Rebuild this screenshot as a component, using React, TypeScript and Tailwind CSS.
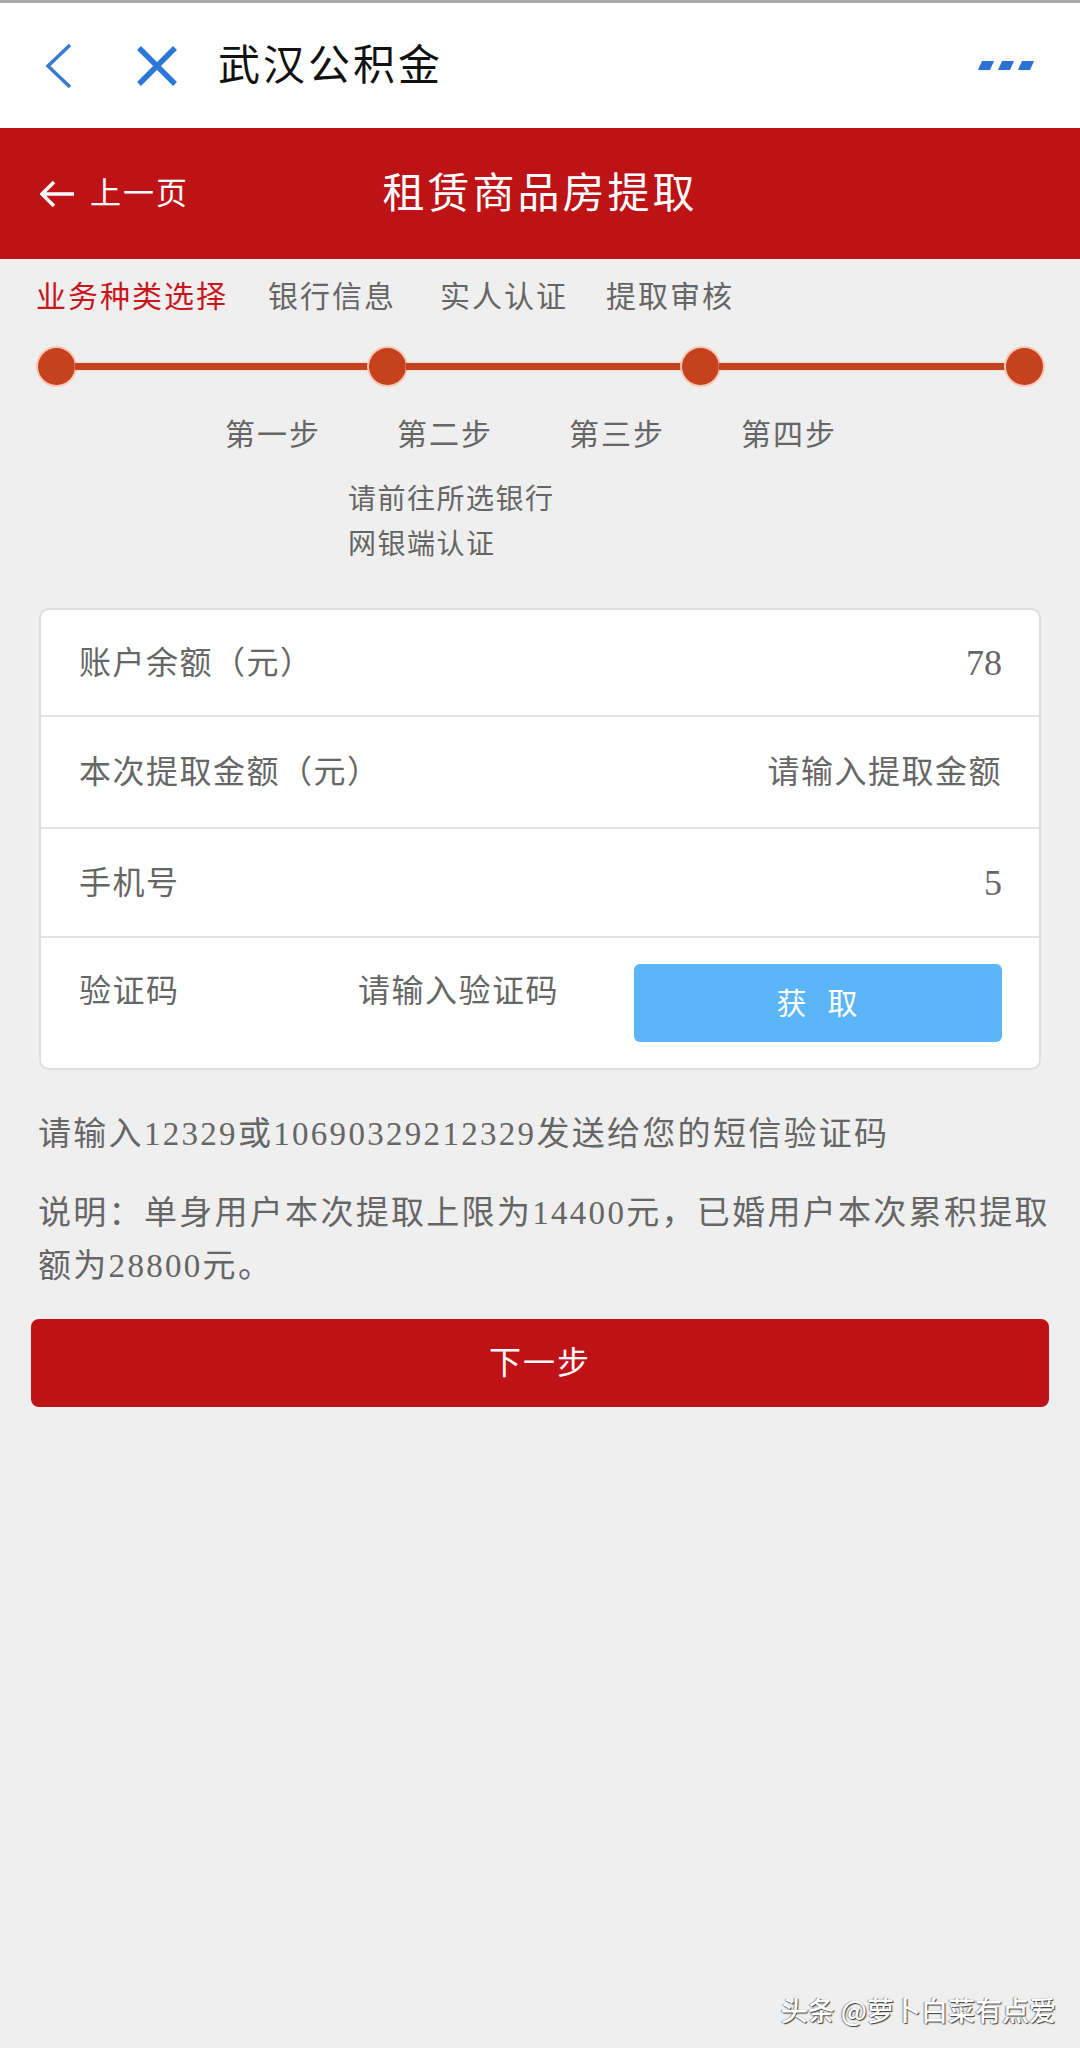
import React from "react";

const serifCjk = "font-['Liberation_Serif','Noto_Sans_CJK_SC',serif]";

const Dot = () => (
  <div className="w-[37px] h-[37px] rounded-full bg-[#c6421f] ring-2 ring-[#f7c9b4] shrink-0" />
);

const Line = ({ w }: { w: string }) => (
  <div className={`${w} h-[7px] bg-[#c4431f] shadow-[0_0_2px_#f5b59a]`} />
);

const App = () => {
  return (
    <div className={`relative min-h-[2048px] w-full bg-[#efefef] ${serifCjk}`}>
      {/* app top bar */}
      <header className="h-[128px] bg-white border-t-[3px] border-[#a9a9a9] flex items-center pl-[44px] pr-[46px]">
        <svg width="30" height="46" viewBox="0 0 30 46" fill="none">
          <path d="M26 2 L4 23 L26 44" stroke="#3a7bd2" strokeWidth="3.5" strokeLinejoin="miter" />
        </svg>
        <svg className="ml-[62px]" width="42" height="42" viewBox="0 0 42 42" fill="none">
          <path d="M3 3 L39 39 M39 3 L3 39" stroke="#2a78d8" strokeWidth="5.5" />
        </svg>
        <h1 className="ml-[40px] text-[42px] leading-none tracking-[3px] text-[#111]">武汉公积金</h1>
        <svg className="ml-auto" width="56" height="10" viewBox="0 0 56 10">
          <polygon points="4,0 16,0 12,9 0,9" fill="#2a72d4" />
          <polygon points="24,0 36,0 32,9 20,9" fill="#2a72d4" />
          <polygon points="44,0 56,0 52,9 40,9" fill="#2a72d4" />
        </svg>
      </header>

      {/* red title bar */}
      <div className="h-[131px] bg-[#bd1216] grid grid-cols-[1fr_auto_1fr] items-center">
        <div className="flex items-center pl-[40px]">
          <svg width="35" height="28" viewBox="0 0 35 28" fill="none">
            <path d="M14 2 L2 14 L14 26 M2 14 H34" stroke="#fff" strokeWidth="3.5" />
          </svg>
          <span className="ml-[15px] text-[31px] leading-none tracking-[2px] text-white">上一页</span>
        </div>
        <h2 className="text-[42px] leading-none tracking-[3px] text-white">租赁商品房提取</h2>
        <div />
      </div>

      {/* tabs */}
      <div className="mt-[18px] flex pl-[36px] text-[30px] leading-[40px] tracking-[2px] text-[#666]">
        <span className="text-[#c8161d]">业务种类选择</span>
        <span className="ml-[40px]">银行信息</span>
        <span className="ml-[44px]">实人认证</span>
        <span className="ml-[38px]">提取审核</span>
      </div>

      {/* progress */}
      <div className="mt-[31px] flex items-center pl-[38px]">
        <Dot />
        <Line w="w-[294px]" />
        <Dot />
        <Line w="w-[276px]" />
        <Dot />
        <Line w="w-[287px]" />
        <Dot />
      </div>

      <div className="mt-[30px] flex gap-[76px] pl-[225px] text-[30px] leading-[40px] tracking-[2px] text-[#666]">
        <span>第一步</span>
        <span>第二步</span>
        <span>第三步</span>
        <span>第四步</span>
      </div>

      <div className="mt-[22px] pl-[348px] text-[28px] leading-[45px] tracking-[1.5px] text-[#666]">
        <div>请前往所选银行</div>
        <div>网银端认证</div>
      </div>

      {/* form card */}
      <div className="mt-[41px] mx-[39px] bg-white border-2 border-[#dedede] rounded-[10px] text-[32px] tracking-[1.5px] text-[#666]">
        <div className="h-[105px] flex items-center justify-between pl-[38px] pr-[37px]">
          <span>账户余额（元）</span>
          <span className="text-[36px] tracking-normal">78</span>
        </div>
        <div className="h-[112px] border-t-2 border-[#e3e3e3] flex items-center justify-between pl-[38px] pr-[37px]">
          <span>本次提取金额（元）</span>
          <span>请输入提取金额</span>
        </div>
        <div className="h-[109px] border-t-2 border-[#e3e3e3] flex items-center justify-between pl-[38px] pr-[37px]">
          <span>手机号</span>
          <span className="text-[36px] tracking-normal">5</span>
        </div>
        <div className="h-[132px] border-t-2 border-[#e3e3e3] flex items-center pl-[38px] pr-[37px]">
          <span className="w-[279px] mb-[24px]">验证码</span>
          <span className="mb-[24px]">请输入验证码</span>
          <button className="ml-auto w-[368px] h-[78px] rounded-[6px] bg-[#5bb5f9] text-white text-[30px] tracking-[2px]">
            获&nbsp;&nbsp;取
          </button>
        </div>
      </div>

      {/* notes */}
      <div className="px-[38px] text-[33px] leading-[53px] tracking-[2.3px] text-[#666]">
        <p className="mt-[38px] whitespace-nowrap">请输入12329或10690329212329发送给您的短信验证码</p>
        <p className="mt-[26px] whitespace-nowrap">
          说明：单身用户本次提取上限为14400元，已婚用户本次累积提取
          <br />
          额为28800元。
        </p>
      </div>

      <button className="mt-[26px] mx-[31px] w-[calc(100%-62px)] h-[88px] rounded-[8px] bg-[#be1217] text-white text-[32px] tracking-[2px] block">
        下一步
      </button>

      {/* watermark */}
      <div className="absolute right-[24px] bottom-[20px] font-['Noto_Sans_CJK_SC',sans-serif] font-medium text-[27px] leading-[36px] text-white [text-shadow:1px_1px_1px_rgba(0,0,0,0.75),-1px_0_1px_rgba(0,0,0,0.4)]">
        头条 @萝卜白菜有点爱
      </div>
    </div>
  );
};

export default App;
